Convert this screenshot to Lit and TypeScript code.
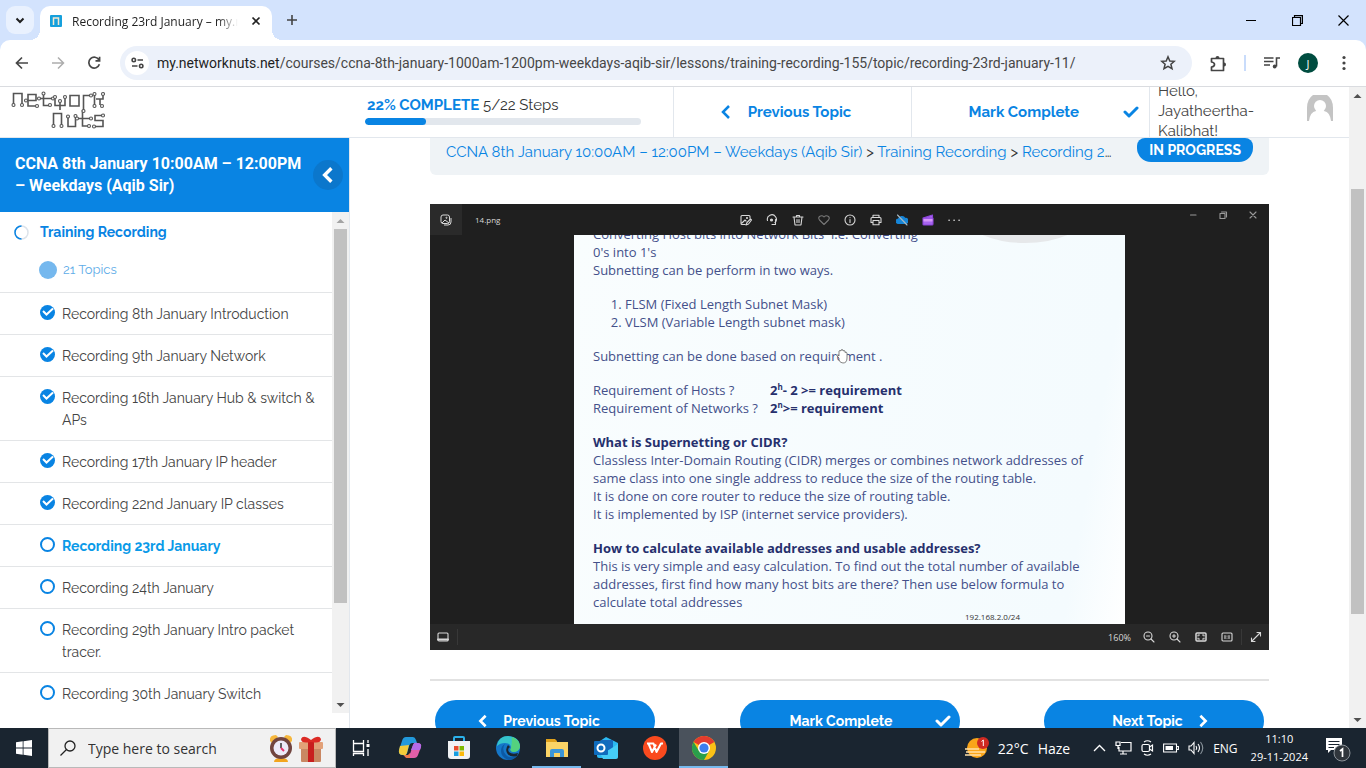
import { LitElement, html, css, svg } from "lit";
import { customElement, property } from "lit/decorators.js";

type Topic = { title: string; state: "done" | "open"; current?: boolean };

const topics: Topic[] = [
  { title: "Recording 8th January Introduction", state: "done" },
  { title: "Recording 9th January Network", state: "done" },
  { title: "Recording 16th January Hub & switch & APs", state: "done" },
  { title: "Recording 17th January IP header", state: "done" },
  { title: "Recording 22nd January IP classes", state: "done" },
  { title: "Recording 23rd January", state: "open", current: true },
  { title: "Recording 24th January", state: "open" },
  { title: "Recording 29th January Intro packet tracer.", state: "open" },
  { title: "Recording 30th January Switch", state: "open" },
];

const reset = css`
  * { box-sizing: border-box; }
  button { border: 0; padding: 0; margin: 0; background: none; font: inherit; color: inherit; display: flex; align-items: center; justify-content: center; flex: none; }
  a { color: inherit; text-decoration: none; }
  svg { display: block; flex: none; }
`;

const chevron = (left: boolean, size: number, width: number) => html`<svg width=${size} height=${size} viewBox="0 0 16 16" fill="none" stroke="currentColor" stroke-width=${width}><path d=${left ? "M11 2L5 8L11 14" : "M5 2L11 8L5 14"} /></svg>`;
const check = html`<svg width="16" height="12" viewBox="0 0 16 12" fill="none" stroke="currentColor" stroke-width="3" stroke-linecap="round" stroke-linejoin="round"><path d="M2 6L6 10L14 2" /></svg>`;

@customElement("browser-bar")
export class BrowserBar extends LitElement {
  static styles = [reset, css`
    :host { display: block; font-family: "Segoe UI", "Open Sans", sans-serif; color: #1f1f1f; background: #d3e3fd; }
    .strip { height: 40px; display: flex; align-items: flex-end; }
    .search { width: 28px; height: 28px; border-radius: 9px; background: #e9f1fe; margin: 0 6px 6px; }
    .tab { position: relative; width: 232px; height: 34px; background: #fff; border-radius: 10px 10px 0 0; display: flex; align-items: center; padding: 0 8px 4px 10px; gap: 10px; font-size: 12px; }
    .tab::before, .tab::after { content: ""; position: absolute; bottom: 0; width: 10px; height: 10px; }
    .tab::before { left: -10px; background: radial-gradient(circle at 0 0, transparent 10px, #fff 10px); }
    .tab::after { right: -10px; background: radial-gradient(circle at 100% 0, transparent 10px, #fff 10px); }
    .title { flex: 1; white-space: nowrap; overflow: hidden; mask-image: linear-gradient(90deg, #000 88%, transparent); }
    .close { width: 16px; height: 16px; }
    .plus { width: 28px; height: 28px; margin: 0 0 6px 6px; color: #444; }
    .windows { margin-left: auto; display: flex; height: 40px; }
    .windows button { width: 46px; color: #000; }
    .bar { height: 46px; background: #fff; border-radius: 10px 10px 0 0; display: flex; align-items: center; padding: 0 8px 0 4px; color: #474747; }
    .nav { width: 36px; height: 34px; }
    .dim { color: #adadad; }
    .address { flex: 1; min-width: 0; height: 34px; margin: 0 12px 0 8px; border-radius: 17px; background: #ecf1fa; display: flex; align-items: center; padding: 0 16px 0 5px; gap: 8px; }
    .info { width: 24px; height: 24px; border-radius: 50%; background: #fff; }
    .url { flex: 1; overflow: hidden; white-space: nowrap; font-family: "Segoe UI", Roboto, sans-serif; font-size: 14px; color: #474747; }
    .url b { font-weight: 400; color: #1f1f1f; }
    .tools { display: flex; align-items: center; }
    .tools button { width: 28px; height: 28px; }
    .rule { width: 2px; height: 16px; background: #c9dcfb; margin: 0 12px; }
    .tools .media, .tools .profile { margin-right: 8px; }
    .face { width: 20px; height: 20px; border-radius: 50%; background: #004d40; color: #fff; font-size: 11px; display: flex; align-items: center; justify-content: center; }
  `];

  render() {
    return html`
      <div class="strip">
        <button class="search" aria-label="Search tabs"><svg width="12" height="12" viewBox="0 0 12 12" fill="none" stroke="#1f1f1f" stroke-width="2"><path d="M2.500 4.500L6 8L9.500 4.500" /></svg></button>
        <div class="tab">
          <svg width="12" height="12" viewBox="0 0 12 12"><rect width="12" height="12" rx="1" fill="#16a0dc" /><path d="M3.500 10V3H8.500V10" fill="none" stroke="#f5e8cf" stroke-width="1.500" /></svg>
          <span class="title">Recording 23rd January – my.networknuts</span>
          <button class="close" aria-label="Close tab"><svg width="10" height="10" viewBox="0 0 10 10" stroke="#222" stroke-width="1.700"><path d="M1.500 1.500L8.500 8.500M8.500 1.500L1.500 8.500" /></svg></button>
        </div>
        <button class="plus" aria-label="New tab"><svg width="12" height="12" viewBox="0 0 12 12" stroke="currentColor" stroke-width="1.600"><path d="M6 1V11M1 6H11" /></svg></button>
        <div class="windows">
          <button aria-label="Minimize"><svg width="10" height="10" viewBox="0 0 10 10" stroke="#000"><path d="M0 5.500H10" /></svg></button>
          <button aria-label="Restore"><svg width="11" height="11" viewBox="0 0 11 11" fill="none" stroke="#000" stroke-width="1.200"><path d="M.5 2.500H8.500V10.500H.5ZM2.500 2.500V.6H10.400V8.500H8.500" /></svg></button>
          <button aria-label="Close"><svg width="11" height="11" viewBox="0 0 11 11" stroke="#000" stroke-width="1.200"><path d="M.5 .5L10.500 10.500M10.500 .5L.5 10.500" /></svg></button>
        </div>
      </div>
      <div class="bar">
        <button class="nav" aria-label="Back"><svg width="14" height="14" viewBox="0 0 14 14" fill="none" stroke="currentColor" stroke-width="1.700"><path d="M13 7H2M7 1.500L1.500 7L7 12.500" /></svg></button>
        <button class="nav dim" aria-label="Forward"><svg width="14" height="14" viewBox="0 0 14 14" fill="none" stroke="currentColor" stroke-width="1.500"><path d="M1 7H12M7 1.500L12.500 7L7 12.500" /></svg></button>
        <button class="nav" aria-label="Reload"><svg width="14" height="14" viewBox="0 0 14 14" fill="none" stroke="currentColor" stroke-width="1.700"><path d="M12 4A5.400 5.400 0 1 0 12.400 8.300M12.600 .8V4.900H8.500" /></svg></button>
        <div class="address">
          <button class="info" aria-label="Site information"><svg width="13" height="12" viewBox="0 0 13 12" fill="none" stroke="#444" stroke-width="1.600"><circle cx="2.800" cy="3" r="1.700" /><path d="M6.500 3H12M1 9H6.500" /><circle cx="10.200" cy="9" r="1.700" /></svg></button>
          <span class="url"><b>my.networknuts.net</b>/courses/ccna-8th-january-1000am-1200pm-weekdays-aqib-sir/lessons/training-recording-155/topic/recording-23rd-january-11/</span>
          <button aria-label="Bookmark"><svg width="16" height="16" viewBox="0 0 16 16" fill="none" stroke="#444" stroke-width="1.500"><path d="M8 1.800L9.800 6L14.300 6.300L10.900 9.300L12 13.700L8 11.300L4 13.700L5.100 9.300L1.700 6.300L6.200 6Z" /></svg></button>
        </div>
        <div class="tools">
          <button aria-label="Extensions"><svg width="17" height="17" viewBox="0 0 17 17"><path d="M1.500 3.500H13.500V15.500H1.500V12Q4.500 11.500 4.500 9.500T1.500 7Z" fill="none" stroke="#444" stroke-width="1.700" stroke-linejoin="round" /><path d="M5.500 3A2 2 0 0 1 9.500 3ZM14 7.500A2 2 0 0 1 14 11.500Z" fill="#444" /></svg></button>
          <span class="rule"></span>
          <button class="media" aria-label="Media controls"><svg width="16" height="14" viewBox="0 0 16 14" fill="none" stroke="#444" stroke-width="1.600"><path d="M0 2H9.500M0 5.500H9.500M0 9H6M12.500 10.500V2H16" /><circle cx="10.700" cy="10.500" r="1.900" fill="#444" stroke="none" /></svg></button>
          <button class="profile" aria-label="Profile"><span class="face">J</span></button>
          <button aria-label="Menu"><svg width="4" height="16" viewBox="0 0 4 16" fill="#444"><circle cx="2" cy="2.500" r="1.600" /><circle cx="2" cy="8" r="1.600" /><circle cx="2" cy="13.500" r="1.600" /></svg></button>
        </div>
      </div>`;
  }
}

@customElement("scroll-rail")
export class ScrollRail extends LitElement {
  @property({ type: Number }) start = 0;
  @property({ type: Number }) size = 50;
  @property({ type: Boolean }) top = false;
  static styles = css`
    :host { display: flex; flex-direction: column; flex: none; width: 17px; background: #f1f1f1; color: #505050; }
    svg { display: block; flex: none; }
    .dim { color: #a3a3a3; }
    .track { flex: 1; display: flex; flex-direction: column; min-height: 0; }
    .thumb { background: #c1c1c1; margin: 0 2px; flex: none; }
  `;
  render() {
    return html`
      <svg class=${this.top ? "dim" : ""} width="17" height="17" viewBox="0 0 17 17"><path d="M4.500 11L8.500 7L12.500 11Z" fill="currentColor" /></svg>
      <div class="track"><div style="height:${this.start}%"></div><div class="thumb" style="height:${this.size}%"></div></div>
      <svg width="17" height="17" viewBox="0 0 17 17"><path d="M4.500 7L8.500 11L12.500 7Z" fill="currentColor" /></svg>`;
  }
}

@customElement("course-header")
export class CourseHeader extends LitElement {
  static styles = [reset, css`
    :host { display: grid; grid-template-columns: 350px 324fr 238fr 238fr 199fr; grid-template-rows: 50px; overflow: hidden; background: #fff; border-bottom: 1px solid #e2e7ed; font-family: Raleway, Lato, sans-serif; font-size: 15px; color: #444; flex: none; }
    .logo { padding: 4px 0 0 11px; }
    .progress { border-right: 1px solid #e2e7ed; padding: 8px 32px 0 15px; }
    .label { padding-left: 2px; line-height: 20px; white-space: nowrap; color: #333; }
    .label b { color: #0984e3; }
    .meter { height: 7px; margin-top: 3px; border-radius: 4px; background: #e2e7ed; overflow: hidden; }
    .fill { height: 7px; border-radius: 4px; background: #0984e3; }
    .step { border-right: 1px solid #e2e7ed; display: flex; align-items: center; justify-content: center; gap: 14px; padding-right: 16px; color: #0984e3; font-weight: 700; white-space: nowrap; }
    .mark { justify-content: flex-end; padding-right: 10px; gap: 44px; }
    .user { display: flex; align-items: center; justify-content: space-between; padding: 0 16px 0 8px; line-height: 20px; }
    .hello { width: 100px; margin-bottom: 2px; }
    .avatar { margin-bottom: 8px; }
  `];
  render() {
    return html`
      <a class="logo" href="#" aria-label="Network Nuts"><svg width="94" height="38" viewBox="0 0 94 38" fill="none" stroke="#555" stroke-width="1.600">
        <path d="M2.500 13V2.500H11V13M15 9.500H25V3.500H17V15H25M28 7.500H41M32.500 3V14.500H38M44 7V14.500H54V7M49 9.500V19M59 4.500H68V15H59ZM72.500 20V4.500H79M83.500 4V14M92 4V8H85M89 8V14" />
        <path d="M42.500 34V22.500H50.500V34M57 26V35.500H64.500V25M66 27.500H79M71.500 19V35H78M92 24.500H84V29.500H92V35.500H84" />
        <g fill="#fff" stroke-width="1.100">${[[2.5, 14], [11, 14], [15, 9.5], [26, 15], [32.5, 2.5], [28, 7.5], [42, 7.5], [39, 14], [44, 6], [54, 6], [49, 10], [72.5, 20], [80, 4.5], [83.5, 3], [92, 3], [83.5, 15], [91, 15], [42.5, 35], [50.5, 35], [57, 25.5], [64.5, 25], [66, 27.5], [80, 27.5], [78, 35], [92, 24.5], [83, 35.5]].map(([x, y]) => svg`<circle cx=${x} cy=${y} r="1.500" />`)}</g>
      </svg></a>
      <div class="progress">
        <div class="label"><b>22% COMPLETE</b> 5/22 Steps</div>
        <div class="meter"><div class="fill" style="width:22%"></div></div>
      </div>
      <a class="step" href="#">${chevron(true, 16, 2.5)}Previous Topic</a>
      <button class="step mark">Mark Complete${check}</button>
      <div class="user">
        <span class="hello">Hello, Jayatheertha-Kalibhat!</span>
        <svg class="avatar" width="26" height="26" viewBox="0 0 26 26"><path d="M0 26V13Q0 4 6 0H20Q26 4 26 13V26Z" fill="#c4c4c4" /><circle cx="13" cy="11" r="6" fill="#fff" /><path d="M2 26Q3 17 9 16H17Q23 17 24 26Z" fill="#fff" /></svg>
      </div>`;
  }
}

@customElement("course-sidebar")
export class CourseSidebar extends LitElement {
  static styles = [reset, css`
    :host { display: flex; flex-direction: column; width: 350px; flex: none; background: #fff; border-right: 1px solid #e2e7ed; font-family: Raleway, Lato, sans-serif; font-size: 14px; line-height: 22px; color: #444; min-height: 0; }
    .head { flex: none; height: 74px; padding: 0 6px 0 15px; background: #0984e3; color: #fff; display: flex; align-items: center; justify-content: space-between; }
    h2 { margin: 0; font: 700 16px/22px Roboto, sans-serif; width: 292px; }
    .fold { width: 30px; height: 30px; border-radius: 50%; background: #0b77cc; }
    .body { flex: 1; min-height: 0; display: flex; margin-bottom: 15px; }
    .list { flex: 1; overflow: hidden; }
    .lesson { display: flex; align-items: center; gap: 11px; padding: 9px 14px 0; height: 31px; font-weight: 700; color: #0984e3; }
    .count { display: flex; align-items: center; gap: 6px; padding: 17px 0 12px 39px; height: 49px; font-size: 13px; color: #5fade8; }
    .dot { width: 18px; height: 18px; border-radius: 50%; background: #75b8ee; }
    ul { margin: 0; padding: 0; list-style: none; }
    li { border-top: 1px solid #e3e5e7; padding: 10px 8px 9px 40px; display: flex; gap: 7px; }
    .mark { margin-top: 2px; }
    .current { color: #0a9ae8; font-weight: 700; }
  `];
  render() {
    return html`
      <div class="head"><h2>CCNA 8th January 10:00AM – 12:00PM – Weekdays (Aqib Sir)</h2><button class="fold" aria-label="Collapse sidebar">${chevron(true, 18, 3)}</button></div>
      <div class="body">
        <div class="list">
          <a class="lesson" href="#"><svg width="15" height="15" viewBox="0 0 15 15" fill="none" stroke-width="1.500"><circle cx="7.500" cy="7.500" r="6.500" stroke="#dde3ea" /><path d="M7.500 1A6.500 6.500 0 0 0 7.500 14" stroke="#0984e3" /></svg>Training Recording</a>
          <div class="count"><span class="dot"></span>21 Topics</div>
          <ul>${topics.map((t) => html`<li>
            <svg class="mark" width="15" height="15" viewBox="0 0 15 15" fill="none">${t.state === "done"
              ? svg`<circle cx="7.500" cy="7.500" r="7.500" fill="#0984e3" /><path d="M3 6L6.500 9.500L13 3.500" stroke="#fff" stroke-width="2" />`
              : svg`<circle cx="7.500" cy="7.500" r="6.500" stroke="#0984e3" stroke-width="2" />`}</svg>
            <a class=${t.current ? "current" : ""} href="#">${t.title}</a></li>`)}</ul>
        </div>
        <scroll-rail .start=${0} .size=${80} .top=${true}></scroll-rail>
      </div>`;
  }
}

@customElement("lesson-video")
export class LessonVideo extends LitElement {
  static styles = [reset, css`
    :host { display: flex; flex-direction: column; background: #1f1f1f; color: #d8d8d8; font-family: "Open Sans", sans-serif; font-size: 8px; }
    .top { height: 31px; display: grid; grid-template-columns: 1fr auto 1fr; }
    .name { display: flex; align-items: center; gap: 13px; }
    .thumb { width: 32px; height: 31px; background: #2a2a2a; }
    .icons { display: flex; align-items: center; gap: 10px; }
    .icons button, .foot button { width: 16px; height: 16px; }
    .win { display: flex; justify-content: flex-end; gap: 14px; padding: 3px 8px 0 0; color: #999; }
    .win button { width: 16px; height: 16px; }
    .stage { height: 389px; overflow: hidden; display: flex; justify-content: center; }
    .paper { position: relative; width: 66%; max-width: 551px; background: linear-gradient(100deg, #f9fdfe, #f4fbfe 90%, #fff); color: #44508a; font-size: 13px; line-height: 18px; padding: 0 0 0 19px; white-space: nowrap; }
    .cloud { position: absolute; right: 40px; top: -46px; width: 120px; height: 54px; border-radius: 50%; background: #e6e8ea; }
    .text { margin-top: -10px; display: flex; flex-direction: column; gap: 16px; }
    p, ol { margin: 0; }
    ol { padding-left: 32px; }
    b { color: #26306d; }
    .req { display: grid; grid-template-columns: 177px 1fr; }
    sup { font-size: 8px; line-height: 0; }
    .ip { position: absolute; left: 391px; bottom: 1px; font-size: 8px; line-height: 12px; color: #333; }
    .hand { position: absolute; left: 262px; top: 114px; }
    .foot { height: 26px; background: #282828; display: flex; align-items: center; gap: 10px; padding: 0 5px; }
    .sep { width: 1px; height: 16px; background: #383838; margin: 0 -4px; }
    .zoom { margin-left: auto; font-size: 9px; }
  `];
  render() {
    const i = (label: string, body: unknown) => html`<button aria-label=${label}><svg width="12" height="12" viewBox="0 0 12 12" fill="none" stroke="currentColor" stroke-width="1.100" stroke-linecap="round" stroke-linejoin="round">${body}</svg></button>`;
    return html`
      <div class="top">
        <div class="name"><button class="thumb" aria-label="Gallery"><svg width="12" height="12" viewBox="0 0 12 12" fill="none" stroke="currentColor"><rect x="1" y="1" width="8.500" height="8.500" rx="2" /><path d="M2 9L5 6L9 9M11 4V8Q11 11 8 11H4" /><circle cx="6.500" cy="3.800" r=".6" /></svg></button>14.png</div>
        <div class="icons">
          ${i("Edit", svg`<path d="M5 10.500H2Q1 10.500 1 9.500V2.500Q1 1.500 2 1.500H9Q10 1.500 10 2.500V4M2 9L5 6L6 7M6 11L7 8.500L10.500 5L11.500 6L8.500 10Z" /><circle cx="7" cy="4" r=".5" />`)}
          ${i("Rotate", svg`<path d="M1.500 6.500A4.500 4.500 0 1 1 9 8.500M9.500 5.500V10.500H6" /><circle cx="5.500" cy="6" r="1" fill="currentColor" />`)}
          ${i("Delete", svg`<path d="M1 3H11M2 3L3 11H9L10 3M4.500 3V1.500H7.500V3M5 5.500V8.500M7 5.500V8.500" />`)}
          ${i("Favourite", svg`<path d="M6 10.500L1.500 6Q0 4 1.500 2.500Q4 .8 6 3Q8 .8 10.500 2.500Q12 4 10.500 6Z" stroke="#777" />`)}
          ${i("Info", svg`<circle cx="6" cy="6" r="5" /><path d="M6 5.500V8.500M6 3.500V3.600" />`)}
          ${i("Print", svg`<path d="M3 8.500H1V4.500Q1 3.500 2 3.500H10Q11 3.500 11 4.500V8.500H9M3 3.500V1.200H9V3.500M3 6.500H9V10.800H3Z" />`)}
          ${i("Cloud off", svg`<path d="M2.500 9.500A2.200 2.200 0 0 1 2.500 5A3.500 3.500 0 0 1 9 4.500A2.500 2.500 0 0 1 10 9.500Z" fill="#1686d9" stroke="#1686d9" /><path d="M1.500 1L11 11" stroke="#a8b8c0" />`)}
          ${i("Clipchamp", svg`<path d="M1 4L10.500 1V4H1V10.500Q1 11 2 11H10Q11 11 11 10V4Z" fill="#a765ee" stroke="#8e45dd" /><path d="M1.500 5H10.500V7.500H1.500Z" fill="#d596fa" stroke="none" />`)}
          ${i("More", svg`<path d="M1 6.200H1.200M6 6.200H6.200M11 6.200H11.200" stroke-width="1.500" />`)}
        </div>
        <div class="win">
          ${i("Minimize", svg`<path d="M3.500 6H9" />`)}${i("Restore", svg`<path d="M3 4.500H8V9.500H3ZM4.500 3H9.500V8" />`)}${i("Close", svg`<path d="M3 3L9 9M9 3L3 9" />`)}
        </div>
      </div>
      <div class="stage"><div class="paper">
        <span class="cloud"></span>
        <div class="text">
          <p>Converting Host bits into Network Bits&nbsp; i.e. Converting<br>0's into 1's<br>Subnetting can be perform in two ways.</p>
          <ol><li>FLSM (Fixed Length Subnet Mask)</li><li>VLSM (Variable Length subnet mask)</li></ol>
          <p>Subnetting can be done based on requirement .</p>
          <div class="req"><span>Requirement of Hosts ?</span><b>2<sup>h</sup>- 2 &gt;= requirement</b><span>Requirement of Networks ?</span><b>2<sup>n</sup>&gt;= requirement</b></div>
          <p><b>What is Supernetting or CIDR?</b><br>Classless Inter-Domain Routing (CIDR) merges or combines network addresses of<br>same class into one single address to reduce the size of the routing table.<br>It is done on core router to reduce the size of routing table.<br>It is implemented by ISP (internet service providers).</p>
          <p><b>How to calculate available addresses and usable addresses?</b><br>This is very simple and easy calculation. To find out the total number of available<br>addresses, first find how many host bits are there? Then use below formula to<br>calculate total addresses</p>
        </div>
        <span class="ip">192.168.2.0/24</span>
        <svg class="hand" width="12" height="15" viewBox="0 0 12 15"><path d="M3 9L1 7Q0 5.500 1.500 6L3 7V2Q4 .8 5 2V1Q6 0 7 1V2Q8 1 9 2V3.500Q10.500 2.500 11 4V9Q11 14 7 14Q4 14 3 11Z" fill="#fff" stroke="#666" stroke-width=".8" /></svg>
      </div></div>
      <div class="foot">
        ${i("Filmstrip", svg`<rect x="1" y="2" width="10" height="8" rx="1" /><path d="M1 8.500H11" stroke-width="2" />`)}
        <span class="sep"></span>
        <span class="zoom">160%</span>
        ${i("Zoom out", svg`<circle cx="5" cy="5" r="4" /><path d="M8 8L11 11M3.500 5H6.500" />`)}
        ${i("Zoom in", svg`<circle cx="5" cy="5" r="4" /><path d="M8 8L11 11M3.500 5H6.500M5 3.500V6.500" />`)}
        ${i("Fit", svg`<rect x="1" y="2" width="10" height="8" rx="1" stroke-width="1.500" /><path d="M3 5V4H4.500M9 5V4H7.500M3 7V8H4.500M9 7V8H7.500" />`)}
        ${i("Actual size", svg`<rect x="1" y="2" width="10" height="8" rx="1" /><path d="M4 4.500V7.500M8 4.500V7.500M6 5V5.100M6 7V7.100" />`)}
        <span class="sep"></span>
        ${i("Full screen", svg`<path d="M1.500 10.500L10.500 1.500M7 1.500H10.500V5M1.500 7V10.500H5" />`)}
      </div>`;
  }
}

@customElement("task-bar")
export class TaskBar extends LitElement {
  static styles = [reset, css`
    :host { display: flex; align-items: stretch; height: 40px; background: #1a2530; color: #fff; font-family: "Segoe UI", "Open Sans", sans-serif; font-size: 14px; flex: none; }
    .start, .app { width: 49px; }
    .start { width: 48px; }
    .search { width: 288px; background: #f1f1f1; border: 1px solid #b9b9b9; color: #333; display: flex; align-items: center; padding: 0 12px 0 11px; gap: 12px; }
    input { flex: 1; min-width: 0; border: 0; background: none; padding: 0; font: inherit; outline: 0; color: #333; }
    input::placeholder { color: #333; opacity: 1; }
    .art { display: flex; gap: 6px; }
    .live { box-shadow: inset 0 -2px #76b9ed; }
    .active { background: #4a525c; }
    .tray { margin-left: auto; display: flex; align-items: center; gap: 9px; white-space: nowrap; }
    .weather { display: flex; align-items: center; gap: 9px; margin-right: 14px; }
    .lang { font-size: 12px; }
    .clock { font-size: 11px; line-height: 18px; text-align: center; margin-left: 4px; }
    .note { width: 48px; height: 40px; padding-right: 8px; margin-left: 1px; }
  `];
  render() {
    const app = (label: string, cls: string, body: unknown) => html`<button class="app ${cls}" aria-label=${label}><svg width="24" height="24" viewBox="0 0 24 24" fill="none">${body}</svg></button>`;
    return html`
      <button class="start" aria-label="Start"><svg width="16" height="16" viewBox="0 0 16 16" fill="#fff"><path d="M0 2.300L6.700 1.300V7.600H0ZM7.500 1.200L16 0V7.600H7.500ZM0 8.400H6.700V14.700L0 13.800ZM7.500 8.400H16V16L7.500 14.800Z" /></svg></button>
      <label class="search">
        <svg width="16" height="16" viewBox="0 0 16 16" fill="none" stroke="#222" stroke-width="1.300"><circle cx="10" cy="6" r="5" /><path d="M6.500 9.500L.5 15.500" /></svg>
        <input type="text" aria-label="Search" placeholder="Type here to search">
        <span class="art">
          <svg width="24" height="28" viewBox="0 0 24 28"><path d="M1 7Q0 1 7 1L9 3L3 9ZM23 7Q24 1 17 1L15 3L21 9Z" fill="#f6b73c" /><path d="M5 28Q5 24 12 24T19 28Z" fill="#f2a51e" /><circle cx="12" cy="14" r="11" fill="#71443f" /><circle cx="12" cy="14" r="7.500" fill="#eceaf8" /><path d="M12 9V14" stroke="#333" stroke-width="1.500" /><path d="M12 14L15 17" stroke="#e8336c" stroke-width="2" /></svg>
          <svg width="24" height="28" viewBox="0 0 24 28"><path d="M2 12H22V27Q22 28 21 28H3Q2 28 2 27Z" fill="#c98762" /><rect y="8" width="24" height="7" rx="1" fill="#e2a178" /><path d="M9 7H15V28H9Z" fill="#c81e1e" /><path d="M12 8Q2 10 2 5Q4 0 12 6Q20 0 22 5Q22 10 12 8Z" fill="#dc2b25" /></svg>
        </span>
      </label>
      ${app("Task view", "", svg`<path d="M4.500 6V4M4.500 7.500H14.500V15.500H4.500ZM4.500 4.500V7.500M14.500 7.500V4M4.500 20V17.500H14.500V20M19 4V7M19 13V20" stroke="#fff" stroke-width="1.300" /><rect x="17.500" y="8" width="3" height="3" fill="#fff" />`)}
      ${app("Copilot", "", svg`<path d="M8 1H15Q17 1 18 4L19 7H14Q12 7 11 10L9 17Q8 20 5 19Q0 19 1 14L4 5Q5 1 8 1Z" fill="#2299db" /><path d="M2 10L11 9L9 17Q8 20 5 19Q0 19 1 14Z" fill="#f2cb3a" /><path d="M16 22H9Q7 22 6 19H10Q12 19 13 15L15 9Q16 6 19 7Q24 7 23 11L20 19Q19 22 16 22Z" fill="#e25fa8" /><path d="M15 9Q16 6 19 7Q24 7 23 11L22 14H13Z" fill="#b36be8" /><path d="M6 19H10L12 17V22H9Q7 22 6 19Z" fill="#f17848" />`)}
      ${app("Store", "", svg`<path d="M7 6V2Q7 1 8 1H16Q17 1 17 2V6" stroke="#2bb1ea" stroke-width="2" /><path d="M1 5H23V20Q23 23 20 23H4Q1 23 1 20Z" fill="#f0f2f4" /><path d="M7 10H11.500V14.500H7Z" fill="#e74c2b" /><path d="M12.500 10H17V14.500H12.500Z" fill="#7fba00" /><path d="M7 15.500H11.500V20H7Z" fill="#159de0" /><path d="M12.500 15.500H17V20H12.500Z" fill="#fbb90b" />`)}
      ${app("Edge", "", svg`<circle cx="12" cy="12" r="12" fill="#1577c8" /><path d="M1 9Q3 0 12 0Q24 1 24 11Q23 16 17 16Q13 15 15 12Q15 7 9 7Q4 7 1 10Z" fill="#35c4cb" /><path d="M16 1Q24 4 24 11Q23 16 17 16Q13 15 15 12Q16 8 16 1Z" fill="#62d95c" fill-opacity=".7" /><path d="M9 8Q5 13 10 19Q14 23 21 20Q18 24 12 24Q5 21 5 15Q5 10 9 8Z" fill="#0c59a4" /><path d="M14 11Q11 13 13 16Q16 19 22 17L21 20Q14 22 11 17Q9 13 12 9Z" fill="#1a2530" />`)}
      ${app("File Explorer", "live", svg`<path d="M1 3H10L12 5V9H1Z" fill="#e0a11b" /><path d="M1 6H23V21H1Z" fill="#fbd466" /><path d="M5 21V15Q5 13 7 13H17Q19 13 19 15V21H15V17H9V21Z" fill="#3b96d8" />`)}
      ${app("Outlook", "", svg`<path d="M3 7L12 1L24 7V20Q24 22 22 22H5Q3 22 3 20Z" fill="#2bb8f1" /><path d="M7 4H19V14H7Z" fill="#1769bd" /><path d="M24 8L7 19L9 23H22Q24 23 24 21Z" fill="#45cdf6" /><rect y="5" width="14" height="14" rx="1" fill="#0f6cbd" /><circle cx="7" cy="12" r="3.500" stroke="#fff" stroke-width="2" />`)}
      ${app("WPS Office", "", svg`<circle cx="12" cy="12" r="12" fill="#fa4a1e" /><path d="M4 7.500H10.500L13.500 16L18 7.500H20M5.500 7.500L9 16L13 8.500" stroke="#fff" stroke-width="2" stroke-linejoin="round" />`)}
      ${app("Chrome", "live active", svg`<circle cx="12" cy="12" r="12" fill="#fbc116" /><path d="M12 12L1.600 6A12 12 0 0 1 22.400 6Z" fill="#e33b2e" /><path d="M1.600 6A12 12 0 0 0 12 24L17 15L7 15Z" fill="#2a9f4b" /><circle cx="12" cy="12" r="6" fill="#fff" /><circle cx="12" cy="12" r="4.600" fill="#3b7ded" />`)}
      <div class="tray">
        <div class="weather"><svg width="24" height="22" viewBox="0 0 24 22"><circle cx="12" cy="11" r="10" fill="#f9a51a" /><path d="M0 12H14M1 15H20M0 18H16" stroke="#ffe0a6" stroke-width="1.500" /><circle cx="18" cy="6" r="6" fill="#cf2a22" /><path d="M16.500 4.500L18.300 3V9" fill="none" stroke="#fff" /></svg><span>22°C</span><span>Haze</span></div>
        <svg width="13" height="8" viewBox="0 0 13 8" fill="none" stroke="#fff" stroke-width="1.300"><path d="M1 7L6.500 1.500L12 7" /></svg>
        <svg width="17" height="14" viewBox="0 0 17 14" fill="none" stroke="#fff" stroke-width="1.200"><path d="M6 1.500H16V10H4V6M8 10V13M5 13H12M1 1H5V4.500H1ZM3 4.500V8" /></svg>
        <svg width="13" height="16" viewBox="0 0 13 16" fill="none" stroke="#fff" stroke-width="1.200"><rect x="1" y="4.500" width="7.500" height="7" rx="1.500" /><path d="M8.500 7L11.500 5V11L8.500 9M3 2Q6.500 -.5 10 2M3 14Q6.500 16.500 10 14" /></svg>
        <svg width="16" height="10" viewBox="0 0 16 10"><path d="M.6 1H13.500V9H.6ZM13.500 3.500H15.400V6.500H13.500" fill="none" stroke="#fff" stroke-width="1.100" /><path d="M2.500 3H10V7H2.500Z" fill="#fff" /></svg>
        <svg width="16" height="14" viewBox="0 0 16 14" fill="none" stroke="#fff" stroke-width="1.100"><path d="M1 5H3L6 1.500V12.500L3 9H1ZM8 5Q9.500 7 8 9M10 3Q13 7 10 11" /><path d="M12.500 1Q17 7 12.500 13" stroke="#89939b" /></svg>
        <span class="lang">ENG</span>
        <div class="clock">11:10<br>29-11-2024</div>
        <button class="note" aria-label="Notifications"><svg width="26" height="28" viewBox="0 0 26 28"><path d="M1 4H17V16H6L3 19V16H1Z" fill="#fff" /><path d="M3.500 7.500H14.500M3.500 10.500H14.500M3.500 13.500H9" stroke="#1a2530" /><circle cx="17" cy="19" r="8" fill="#30363c" stroke="#8b9298" /><path d="M15 17L17.500 15V23" fill="none" stroke="#fff" stroke-width="1.700" /></svg></button>
      </div>`;
  }
}

@customElement("app-root")
export class AppRoot extends LitElement {
  static styles = [reset, css`
    :host { display: flex; flex-direction: column; height: 100vh; overflow: hidden; background: #fff; font-family: Raleway, Lato, sans-serif; }
    .page { flex: 1; min-height: 0; display: flex; border-top: 1px solid #dadce0; }
    .site { flex: 1; min-width: 0; display: flex; flex-direction: column; }
    .columns { flex: 1; min-height: 0; display: flex; }
    main { flex: 1; min-width: 0; overflow: hidden; padding: 0 80px; }
    .crumbs { height: 37px; margin-bottom: 29px; padding: 0 16px; background: #eff3f6; border-radius: 0 0 6px 6px; display: flex; align-items: flex-start; gap: 20px; font-size: 15px; line-height: 28px; color: #333; }
    .trail { flex: 1; min-width: 0; overflow: hidden; text-overflow: ellipsis; white-space: nowrap; color: #333; }
    .trail a { color: #0984e3; }
    .status { flex: none; padding: 0 12px; border-radius: 8px 8px 14px 14px; background: #0984e3; color: #fff; font-weight: 700; font-size: 14px; line-height: 24px; }
    hr { border: 0; height: 2px; background: #e2e2e2; margin: 29px 0 19px; }
    .actions { display: flex; justify-content: space-between; padding: 0 5px; color: #fff; font-weight: 700; font-size: 14px; }
    .action { width: 220px; height: 42px; border-radius: 21px; background: #0984e3; display: flex; align-items: center; justify-content: center; gap: 13px; white-space: nowrap; }
    .prev { padding-right: 14px; }
    .next { padding-left: 14px; }
    .mark { justify-content: flex-end; padding-right: 9px; gap: 42px; font: inherit; color: inherit; }
  `];
  render() {
    return html`
      <browser-bar></browser-bar>
      <div class="page">
        <div class="site">
          <course-header></course-header>
          <div class="columns">
            <course-sidebar></course-sidebar>
            <main>
              <div class="crumbs">
                <nav class="trail"><a href="#">CCNA 8th January 10:00AM – 12:00PM – Weekdays (Aqib Sir)</a> &gt; <a href="#">Training Recording</a> &gt; <a href="#">Recording 23rd January</a></nav>
                <span class="status">IN PROGRESS</span>
              </div>
              <lesson-video></lesson-video>
              <hr>
              <div class="actions">
                <a class="action prev" href="#">${chevron(true, 14, 3)}Previous Topic</a>
                <button class="action mark">Mark Complete${check}</button>
                <a class="action next" href="#">Next Topic${chevron(false, 14, 3)}</a>
              </div>
            </main>
          </div>
        </div>
        <scroll-rail .start=${14} .size=${70}></scroll-rail>
      </div>
      <task-bar></task-bar>`;
  }
}
